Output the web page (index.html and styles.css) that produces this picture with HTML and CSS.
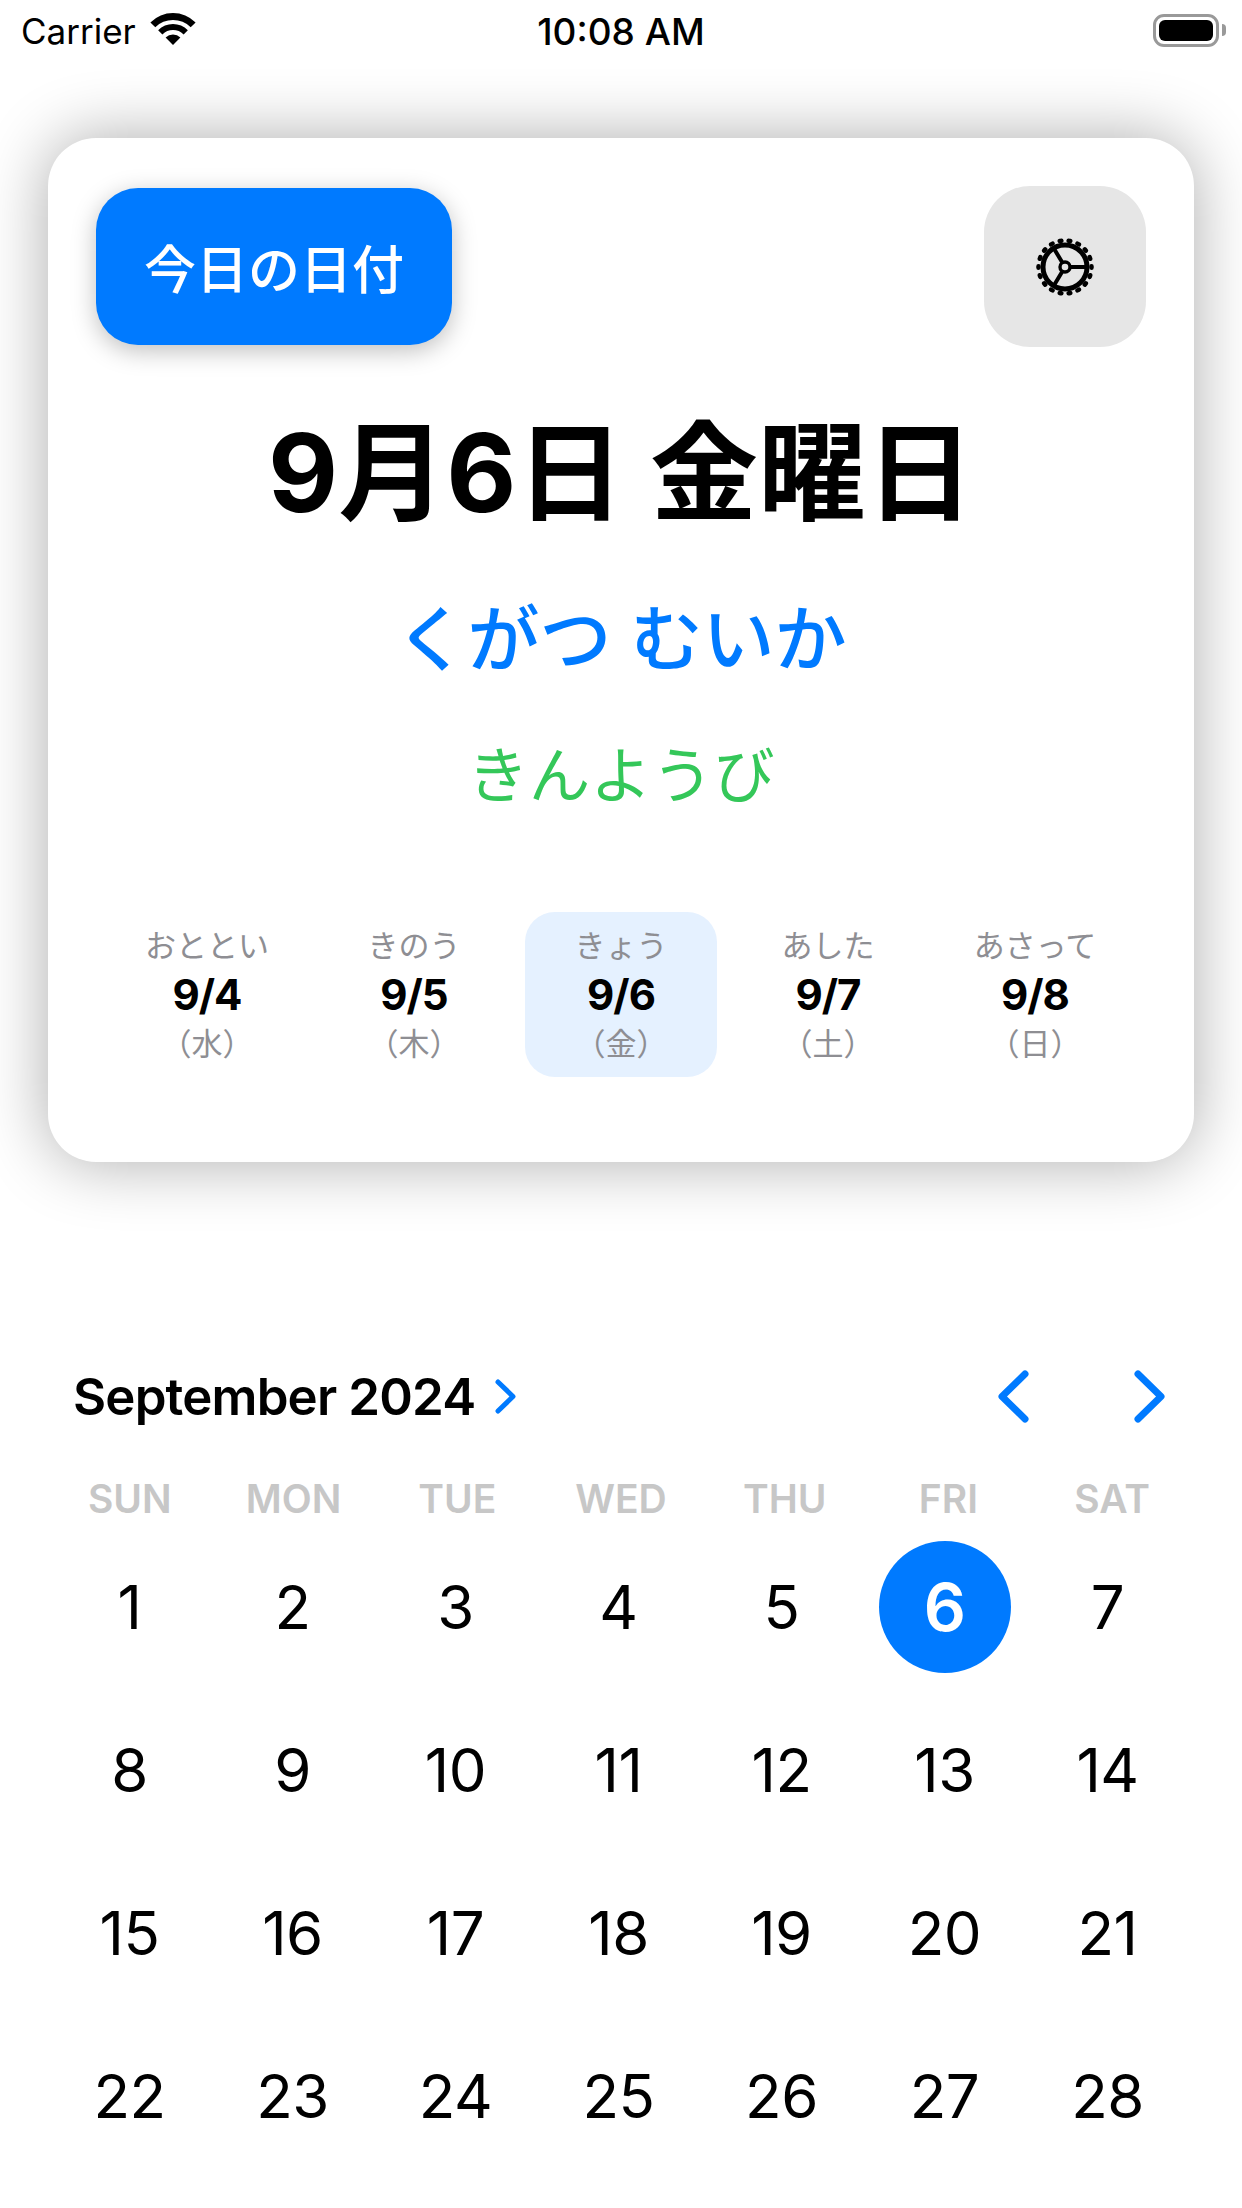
FILE: index.html
```html
<!DOCTYPE html>
<html lang="ja">
<head>
    <meta charset="UTF-8">
    <title>今日の日付</title>
    <link rel="stylesheet" href="styles.css">
</head>
<body>

    <!-- Status bar -->
    <div class="status-bar">
        <div class="status-left">
            <span>Carrier</span>
            <svg class="wifi" viewBox="0 0 46 33" width="46" height="33">
                <path d="M.4 10.4A32 32 0 0 1 45.6 10.4L40.7 15.3A25 25 0 0 0 5.3 15.3Z"/>
                <path d="M8.15 18.15A21 21 0 0 1 37.85 18.15L33.6 22.4A15 15 0 0 0 12.4 22.4Z"/>
                <path d="M23 33L15.6 25.6A10.5 10.5 0 0 1 30.4 25.6Z"/>
            </svg>
        </div>
        <div class="status-time">10:08 AM</div>
        <div class="status-right">
            <div class="battery"><div class="battery-level"></div></div>
            <div class="battery-nub"></div>
        </div>
    </div>

    <!-- Today card -->
    <section class="card">
        <div class="card-top">
            <button class="today-btn">今日の日付</button>
            <button class="settings-btn">
                <svg viewBox="0 0 60 60" width="60" height="60">
                    <circle cx="30" cy="30" r="26.5" fill="none" stroke="#000" stroke-width="4.5" stroke-linecap="round" pathLength="18" stroke-dasharray="0.18 0.82" stroke-dashoffset="0.09"/>
                    <circle cx="30" cy="30" r="22" fill="none" stroke="#000" stroke-width="5"/>
                    <path d="M35 30H52M27 25L18 10M27 35L18 50" fill="none" stroke="#000" stroke-width="4"/>
                    <circle cx="30" cy="30" r="5" fill="#e6e6e6" stroke="#000" stroke-width="3.4"/>
                </svg>
            </button>
        </div>

        <h1 class="date-main">9月6日 金曜日</h1>
        <p class="date-kana">くがつ むいか</p>
        <p class="weekday-kana">きんようび</p>

        <div class="days">
            <div class="day">
                <span class="day-label">おととい</span>
                <span class="day-date">9/4</span>
                <span class="day-week">（水）</span>
            </div>
            <div class="day">
                <span class="day-label">きのう</span>
                <span class="day-date">9/5</span>
                <span class="day-week">（木）</span>
            </div>
            <div class="day day-today">
                <span class="day-label">きょう</span>
                <span class="day-date">9/6</span>
                <span class="day-week">（金）</span>
            </div>
            <div class="day">
                <span class="day-label">あした</span>
                <span class="day-date">9/7</span>
                <span class="day-week">（土）</span>
            </div>
            <div class="day">
                <span class="day-label">あさって</span>
                <span class="day-date">9/8</span>
                <span class="day-week">（日）</span>
            </div>
        </div>
    </section>

    <!-- Month calendar -->
    <section class="calendar">
        <div class="cal-header">
            <div class="cal-title">
                <span>September 2024</span>
                <svg viewBox="0 0 21 35" width="21" height="35"><path d="M3 3L18 17.5L3 32" class="chevron" stroke-width="5"/></svg>
            </div>
            <div class="cal-nav">
                <svg viewBox="0 0 32 53" width="32" height="53"><path d="M28 4L5 26.5L28 49" class="chevron" stroke-width="7"/></svg>
                <svg viewBox="0 0 32 53" width="32" height="53"><path d="M4 4L27 26.5L4 49" class="chevron" stroke-width="7"/></svg>
            </div>
        </div>

        <div class="cal-weekdays">
            <span>SUN</span><span>MON</span><span>TUE</span><span>WED</span><span>THU</span><span>FRI</span><span>SAT</span>
        </div>

        <div class="cal-days">
            <span>1</span><span>2</span><span>3</span><span>4</span><span>5</span><span class="selected">6</span><span>7</span>
            <span>8</span><span>9</span><span>10</span><span>11</span><span>12</span><span>13</span><span>14</span>
            <span>15</span><span>16</span><span>17</span><span>18</span><span>19</span><span>20</span><span>21</span>
            <span>22</span><span>23</span><span>24</span><span>25</span><span>26</span><span>27</span><span>28</span>
        </div>
    </section>

</body>
</html>
```

FILE: styles.css
```css
/* General body and layout styling */
html, body {
    margin: 0;
    padding: 0;
}

body {
    width: 1242px;
    height: 2208px;
    overflow: hidden;
    background-color: #fff;
    color: #000;
    font-family: 'Inter', 'Noto Sans CJK JP', sans-serif;
}

/* Status bar */
.status-bar {
    height: 62px;
    display: grid;
    grid-template-columns: 1fr auto 1fr;
    align-items: center;
    padding: 0 21px;
    font-size: 35px;
}

.status-left {
    display: flex;
    align-items: center;
    gap: 14px;
}

.wifi {
    margin-top: -5px;
}

.status-time {
    font-size: 37px;
    font-weight: 500;
}

.status-right {
    display: flex;
    align-items: center;
    justify-content: flex-end;
    gap: 3px;
    margin: -2px -5px 0 0;
}

.battery {
    width: 66px;
    height: 33px;
    box-sizing: border-box;
    border: 3px solid #999;
    border-radius: 11px;
    padding: 3px;
}

.battery-level {
    height: 100%;
    background-color: #000;
    border-radius: 6px;
}

.battery-nub {
    width: 4px;
    height: 12px;
    background-color: #999;
    border-radius: 0 4px 4px 0;
}

/* Today card */
.card {
    box-sizing: border-box;
    width: 1146px;
    height: 1024px;
    margin: 76px auto 0;
    padding: 48px 48px 0;
    background-color: #fff;
    border-radius: 48px;
    box-shadow: 0 0 66px rgba(0, 0, 0, 0.33);
}

.card-top {
    display: flex;
    justify-content: space-between;
    align-items: center;
}

.today-btn {
    width: 356px;
    height: 157px;
    border: none;
    border-radius: 42px;
    background-color: #007aff;
    color: #fff;
    font-family: inherit;
    font-size: 52px;
    font-weight: 500;
    box-shadow: 0 6px 24px rgba(0, 0, 0, 0.25);
}

.settings-btn {
    width: 162px;
    height: 161px;
    border: none;
    border-radius: 46px;
    background-color: #e6e6e6;
    display: flex;
    align-items: center;
    justify-content: center;
    padding: 0;
}

.date-main {
    margin: 66px 0 0;
    font-size: 108px;
    font-weight: 700;
    line-height: 120px;
    text-align: center;
}

.date-kana {
    margin: 61px 0 0;
    font-size: 72px;
    font-weight: 500;
    line-height: 90px;
    color: #007aff;
    text-align: center;
}

.weekday-kana {
    margin: 55px 0 0;
    font-size: 61.5px;
    line-height: 74px;
    color: #34c759;
    text-align: center;
}

/* Five day strip */
.days {
    margin-top: 99px;
    display: grid;
    grid-template-columns: repeat(5, 192px);
    gap: 15px;
    justify-content: center;
}

.day {
    height: 165px;
    box-sizing: border-box;
    padding-top: 16px;
    display: flex;
    flex-direction: column;
    align-items: center;
    border-radius: 30px;
}

.day-today {
    background-color: #e5f1ff;
}

.day-label,
.day-week {
    font-size: 31px;
    line-height: 36px;
    color: #8e8e93;
}

.day-date {
    margin: 6px 0;
    font-size: 42px;
    line-height: 50px;
    letter-spacing: -1px;
    font-weight: 700;
}

/* Month calendar */
.calendar {
    margin-top: 203px;
    padding: 0 48px;
}

.cal-header {
    display: flex;
    justify-content: space-between;
    align-items: center;
    height: 62px;
    padding: 0 28px 0 25px;
}

.cal-title {
    display: flex;
    align-items: center;
    gap: 20px;
    font-size: 51px;
    font-weight: 600;
    letter-spacing: -0.85px;
}

.cal-nav {
    display: flex;
    gap: 105px;
}

.chevron {
    fill: none;
    stroke: #007aff;
    stroke-linecap: round;
    stroke-linejoin: round;
}

.cal-weekdays {
    margin-top: 48px;
    display: grid;
    grid-template-columns: repeat(7, 1fr);
    font-size: 39px;
    line-height: 48px;
    font-weight: 600;
    color: #c7c7c7;
    text-align: center;
}

.cal-days {
    margin-top: 2px;
    display: grid;
    grid-template-columns: repeat(7, 163px);
    grid-auto-rows: 163px;
    font-size: 60px;
    letter-spacing: -0.5px;
}

.cal-days span {
    display: flex;
    align-items: center;
    justify-content: center;
}

.cal-days .selected {
    width: 132px;
    height: 132px;
    align-self: center;
    justify-self: center;
    border-radius: 50%;
    background-color: #007aff;
    color: #fff;
    font-weight: 600;
    font-size: 66px;
}
```
